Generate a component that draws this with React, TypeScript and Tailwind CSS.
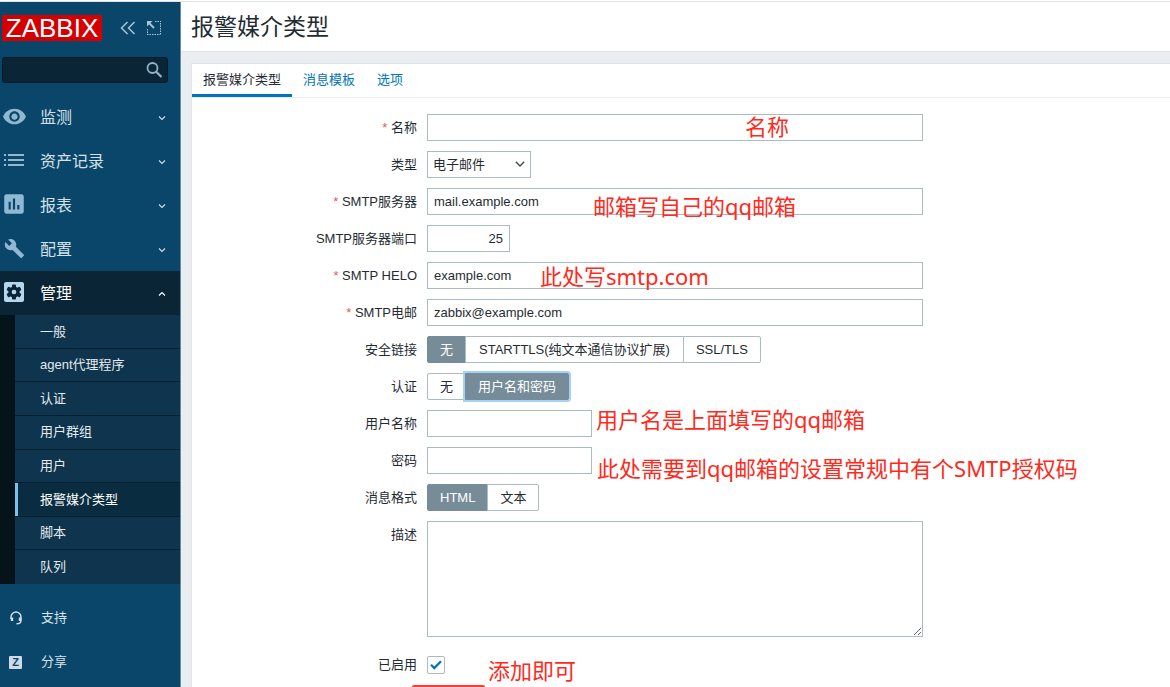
import { useState } from 'react';
import type { ReactNode } from 'react';
import { MdAssessment, MdBuild, MdVisibility } from 'react-icons/md';
import { clsx } from 'clsx';

const inputClass =
  'h-[27px] border border-[#acbbc2] bg-white px-1.5 text-[13px] text-[#1f2c33] outline-none';

function ListIcon() {
  return (
    <svg viewBox="0 0 20 12" className="h-3 w-5" fill="currentColor" aria-hidden="true">
      <path d="M0 0h2v2H0zM4 0h16v2H4zM0 5h2v2H0zM4 5h16v2H4zM0 10h2v2H0zM4 10h16v2H4z" />
    </svg>
  );
}

function GearBoxIcon() {
  return (
    <svg viewBox="0 0 20 20" className="size-5" aria-hidden="true">
      <rect width="20" height="20" rx="2" fill="#b4d7ee" />
      <g fill="#0a2636">
        <circle cx="10" cy="10" r="5.6" />
        <rect x="8" y="2.4" width="4" height="15.2" rx="1" />
        <rect x="8" y="2.4" width="4" height="15.2" rx="1" transform="rotate(60 10 10)" />
        <rect x="8" y="2.4" width="4" height="15.2" rx="1" transform="rotate(120 10 10)" />
      </g>
      <circle cx="10" cy="10" r="2.3" fill="#b4d7ee" />
    </svg>
  );
}

function Chevron({ up = false }: { up?: boolean }) {
  return (
    <svg viewBox="0 0 8 6" className="h-1.5 w-2" fill="none" stroke="currentColor" strokeWidth="1.1" aria-hidden="true">
      <path d={up ? 'M1 4.5 4 1.5 7 4.5' : 'M1 1.5 4 4.5 7 1.5'} />
    </svg>
  );
}

const menu = [
  { label: '监测', icon: <MdVisibility className="size-[25px]" /> },
  { label: '资产记录', icon: <ListIcon /> },
  { label: '报表', icon: <MdAssessment className="size-[26px]" /> },
  { label: '配置', icon: <MdBuild className="size-[21px]" /> },
  { label: '管理', icon: <GearBoxIcon />, open: true },
];

const submenu = ['一般', 'agent代理程序', '认证', '用户群组', '用户', '报警媒介类型', '脚本', '队列'];

function Sidebar() {
  return (
    <aside className="flex w-[181px] shrink-0 flex-col border-r border-[#5f8ba3] bg-[#0a466a] text-[#d5e1e8]">
      <div className="flex items-center pt-[13px] pl-0.5 text-[#a9c5d6]">
        <a href="#" className="flex h-[26px] w-[100px] items-center justify-center bg-[#d40000] font-['Liberation_Sans',sans-serif] text-[26px] text-white">
          ZABBIX
        </a>
        <button type="button" aria-label="收起" className="ml-[18px]">
          <svg viewBox="0 0 16 14" className="h-3.5 w-4" fill="none" stroke="currentColor" strokeWidth="1.5">
            <path d="M7.5 1 1.5 7l6 6M14.5 1l-6 6 6 6" />
          </svg>
        </button>
        <button type="button" aria-label="隐藏" className="ml-[11px]">
          <svg viewBox="0 0 14 14" className="size-3.5" fill="none" stroke="currentColor">
            <path d="M8 .5h6M13.5 2v12M0 13.5h13M.5 8v5" strokeDasharray="1.5 1" />
            <path d="M1 1l6 6" strokeWidth="1.8" />
            <path d="M0 0h5.5L0 5.5z" fill="currentColor" stroke="none" />
          </svg>
        </button>
      </div>

      <div className="mt-4 mr-3 ml-0.5 flex h-[26px] items-center rounded-[3px] border border-[#06192a] bg-[#0a2636] pr-1">
        <input type="text" aria-label="搜索" className="min-w-0 flex-1 bg-transparent px-2 text-[13px] text-white outline-none" />
        <button type="button" aria-label="搜索" className="text-[#8fb3ca]">
          <svg viewBox="0 0 18 18" className="size-[18px]" fill="none" stroke="currentColor" strokeWidth="1.8">
            <circle cx="7.5" cy="7" r="5" />
            <path d="m11 10.5 5.5 5.5" strokeWidth="2.2" />
          </svg>
        </button>
      </div>

      <nav className="mt-3">
        {menu.map((item) => (
          <a
            key={item.label}
            href="#"
            className={clsx('flex h-11 items-center pr-3.5', item.open && 'bg-[#0a2636] text-white')}
          >
            <span className="flex w-7 shrink-0 justify-center pb-0.5 text-[#8fb8d3]">{item.icon}</span>
            <span className="ml-3 flex-1 pt-0.5 text-base">{item.label}</span>
            <span className="pt-0.5">
              <Chevron up={item.open} />
            </span>
          </a>
        ))}
        <ul className="grid h-[269px] auto-rows-fr border-l-[15px] border-[#05131b] bg-[#0f344d] text-[13px] text-[#e3ebf0]">
          {submenu.map((label) => (
            <li key={label} className="border-b border-[#07202f] last:border-b-0">
              <a
                href="#"
                className={clsx(
                  'flex h-full items-center border-l-3 pl-[22px]',
                  label === '报警媒介类型' ? 'border-[#7cc0ee] bg-[#0a2c40] text-white' : 'border-transparent',
                )}
              >
                {label}
              </a>
            </li>
          ))}
        </ul>
      </nav>

      <div className="mt-3 text-[13px]">
        <a href="#" className="flex h-11 items-center">
          <span className="flex w-[31px] justify-center">
            <svg viewBox="0 0 12 14" className="h-3.5 w-3" fill="none" stroke="currentColor" strokeWidth="1.4">
              <path d="M1 8V6a5 5 0 0 1 10 0v3.5c0 2-1.5 3.3-4.5 3.3" />
              <path d="M2 6.5v3.5M10 6.5v3.5" strokeWidth="2.4" />
            </svg>
          </span>
          <span className="ml-2.5">支持</span>
        </a>
        <a href="#" className="flex h-11 items-center">
          <span className="flex w-[31px] justify-center">
            <span className="flex size-[13px] items-center justify-center rounded-[1px] bg-[#cddbe4] text-[11px] font-bold text-[#0a466a]">
              Z
            </span>
          </span>
          <span className="ml-2.5">分享</span>
        </a>
      </div>
    </aside>
  );
}

interface RowProps {
  label: string;
  htmlFor?: string;
  required?: boolean;
  children: ReactNode;
}

function Row({ label, htmlFor, required, children }: RowProps) {
  return (
    <div className="flex items-start gap-2.5">
      <label htmlFor={htmlFor} className="w-[225px] shrink-0 text-right leading-[27px]">
        {required && <span className="text-[#e45959]">* </span>}
        {label}
      </label>
      <div className="flex min-w-0 flex-1">{children}</div>
    </div>
  );
}

interface SegmentedProps {
  name: string;
  options: string[];
  initial: string;
  focused?: boolean;
}

function Segmented({ name, options, initial, focused }: SegmentedProps) {
  const [value, setValue] = useState(initial);

  return (
    <div role="radiogroup" aria-label={name} className="flex h-[27px]">
      {options.map((option) => (
        <label
          key={option}
          className={clsx(
            'relative -ml-px flex items-center border px-[13px] first:ml-0 first:rounded-l-xs first:px-3 last:rounded-r-xs last:px-3',
            option === value ? 'border-[#768d99] bg-[#768d99] text-white' : 'border-[#acbbc2] bg-white',
            focused && option === value && 'ring-2 ring-[#a5d0fa]',
          )}
        >
          <input
            type="radio"
            name={name}
            checked={option === value}
            onChange={() => setValue(option)}
            className="sr-only"
          />
          {option}
        </label>
      ))}
    </div>
  );
}

const notes = [
  { text: '名称', place: 'left-[553px] top-[46px]' },
  { text: '邮箱写自己的qq邮箱', place: 'left-[401px] top-[126px]' },
  { text: '此处写smtp.com', place: 'left-[348px] top-[196px]' },
  { text: '用户名是上面填写的qq邮箱', place: 'left-[404px] top-[339px]' },
  { text: '此处需要到qq邮箱的设置常规中有个SMTP授权码', place: 'left-[405px] top-[388px]' },
  { text: '添加即可', place: 'left-[296px] top-[590px]' },
];

function Notes() {
  return (
    <div className="pointer-events-none absolute inset-0 overflow-hidden font-['Noto_Sans','Noto_Sans_CJK_SC',sans-serif] text-[22px] leading-8 text-[#ff2a1c]">
      {notes.map((note) => (
        <span key={note.text} className={clsx('absolute whitespace-nowrap', note.place)}>
          {note.text}
        </span>
      ))}
      <span className="absolute bottom-0 left-[220px] h-0.5 w-[73px] rounded-t-sm bg-[#f5402f]" />
    </div>
  );
}

function MediaTypeForm() {
  return (
    <form className="flex flex-col gap-2.5 pt-4 pr-4">
      <Row label="名称" htmlFor="name" required>
        <input id="name" type="text" className={clsx(inputClass, 'w-full max-w-[496px]')} />
      </Row>
      <Row label="类型" htmlFor="type">
        <div className="relative">
          <select id="type" className={clsx(inputClass, 'w-[104px] appearance-none pl-[5px]')}>
            <option>电子邮件</option>
          </select>
          <svg viewBox="0 0 10 6" className="pointer-events-none absolute top-2.5 right-1.5 h-1.5 w-2.5" fill="none" stroke="#3c464c" strokeWidth="1.3">
            <path d="M.8.8 5 5 9.2.8" />
          </svg>
        </div>
      </Row>
      <Row label="SMTP服务器" htmlFor="server" required>
        <input id="server" type="text" defaultValue="mail.example.com" className={clsx(inputClass, 'w-full max-w-[496px]')} />
      </Row>
      <Row label="SMTP服务器端口" htmlFor="port">
        <input id="port" type="text" defaultValue="25" className={clsx(inputClass, 'w-[83px] text-right')} />
      </Row>
      <Row label="SMTP HELO" htmlFor="helo" required>
        <input id="helo" type="text" defaultValue="example.com" className={clsx(inputClass, 'w-full max-w-[496px]')} />
      </Row>
      <Row label="SMTP电邮" htmlFor="email" required>
        <input id="email" type="text" defaultValue="zabbix@example.com" className={clsx(inputClass, 'w-full max-w-[496px]')} />
      </Row>
      <Row label="安全链接">
        <Segmented name="安全链接" options={['无', 'STARTTLS(纯文本通信协议扩展)', 'SSL/TLS']} initial="无" />
      </Row>
      <Row label="认证">
        <Segmented name="认证" options={['无', '用户名和密码']} initial="用户名和密码" focused />
      </Row>
      <Row label="用户名称" htmlFor="username">
        <input id="username" type="text" className={clsx(inputClass, 'w-[165px]')} />
      </Row>
      <Row label="密码" htmlFor="password">
        <input id="password" type="password" className={clsx(inputClass, 'w-[165px]')} />
      </Row>
      <Row label="消息格式">
        <Segmented name="消息格式" options={['HTML', '文本']} initial="HTML" />
      </Row>
      <Row label="描述" htmlFor="description">
        <textarea id="description" className="h-29 w-full max-w-[496px] border border-[#acbbc2] p-1.5 outline-none" />
      </Row>
      <div className="pt-1">
        <Row label="已启用" htmlFor="enabled">
          <div className="relative flex h-[27px] items-center">
            <input
              id="enabled"
              type="checkbox"
              defaultChecked
              className="peer size-[18px] appearance-none rounded-xs border border-[#acbbc2] bg-white"
            />
            <svg viewBox="0 0 12 10" className="pointer-events-none invisible absolute left-[3px] h-2.5 w-3 peer-checked:visible" fill="none" stroke="#0275b8" strokeWidth="2.2">
              <path d="m1 4.8 3.3 3.3L11 1.2" />
            </svg>
          </div>
        </Row>
      </div>
    </form>
  );
}

export default function App() {
  const [tab, setTab] = useState('报警媒介类型');

  return (
    <div className="flex min-h-screen flex-col bg-white font-['Liberation_Sans','Noto_Sans_CJK_SC',sans-serif] text-[13px] text-[#1f2c33]">
      <div className="h-0.5 border-b border-[#dfe4e7]" />
      <div className="flex flex-1">
        <Sidebar />
        <main className="flex min-w-0 flex-1 flex-col bg-[#ebeef0]">
          <header className="flex h-[50px] items-center border-b border-[#dfe4e7] bg-white pt-0.5 pl-2.5">
            <h1 className="text-[23px]">报警媒介类型</h1>
          </header>
          <section className="relative mt-[11px] ml-2.5 flex-1 border-t border-l border-[#dfe4e7] bg-white">
            <div role="tablist" className="flex h-[34px] border-b border-[#ebeef0]">
              {['报警媒介类型', '消息模板', '选项'].map((label) => (
                <button
                  key={label}
                  type="button"
                  role="tab"
                  aria-selected={tab === label}
                  onClick={() => setTab(label)}
                  className={clsx(
                    'border-b-3 px-[11px] pt-0.5',
                    tab === label ? 'border-[#0275b8]' : 'border-transparent text-[#0275b8]',
                  )}
                >
                  {label}
                </button>
              ))}
            </div>
            <MediaTypeForm />
            <Notes />
          </section>
        </main>
      </div>
    </div>
  );
}
